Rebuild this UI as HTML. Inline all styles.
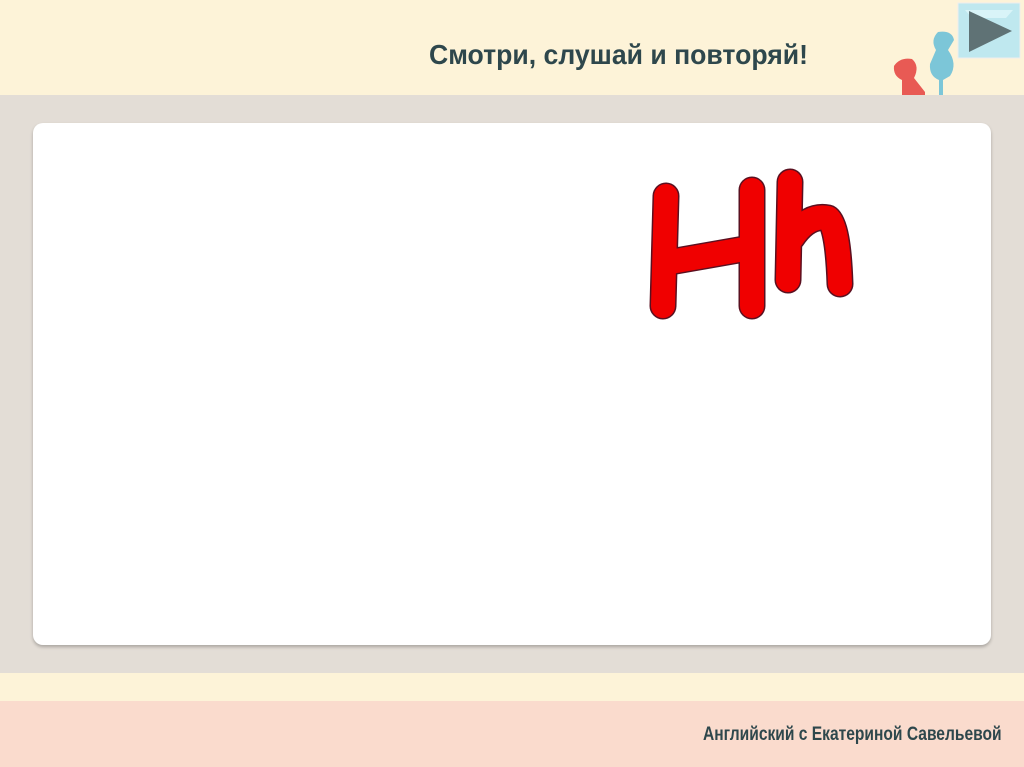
<!DOCTYPE html>
<html><head><meta charset="utf-8"><style>
body{margin:0;width:1024px;height:767px;overflow:hidden;position:relative;background:#e3ddd6;font-family:"Liberation Sans","DejaVu Sans",sans-serif}
.top{position:absolute;left:0;top:0;width:1024px;height:95px;background:#fdf3d8}
.card{position:absolute;left:33px;top:123px;width:958px;height:522px;background:#fff;border-radius:10px;box-shadow:0 2px 3px rgba(0,0,0,.25)}
.b1{position:absolute;left:0;top:673px;width:1024px;height:28px;background:#fdf3d8}
.b2{position:absolute;left:0;top:701px;width:1024px;height:66px;background:#fadbcd}
.t{position:absolute;white-space:nowrap;font-weight:bold;color:#2e474c;transform-origin:left top}
</style></head><body>
<div class="top"></div>
<div class="card"></div>
<div class="b1"></div><div class="b2"></div>
<div class="t" style="left:429px;top:39px;font-size:28px;transform:scaleX(0.95)">Смотри, слушай и повторяй!</div>
<div class="t" style="left:703px;top:724px;font-size:19px;transform:scaleX(0.82)">Английский с Екатериной Савельевой</div>
<svg style="position:absolute;left:0;top:0" width="1024" height="767">
<rect x="958" y="3" width="62" height="55" fill="#bfe8ef" stroke="#eee"/>
<polygon points="965,10 1013,10 1006,18 972,18" fill="#d9f4f8"/>
<polygon points="969,11 969,52 1012,31" fill="#5f7275"/>
<path d="M902 95 L902 80 Q893 76 894 66 Q900 57 912 59 Q920 66 914 78 L925 92 L925 95 Z" fill="#e85a54"/>
<path d="M939 95 L939 80 Q929 76 930 64 L936 50 Q930 40 938 32 Q952 30 954 40 L948 50 Q958 64 950 76 L943 80 L943 95 Z" fill="#7cc6d8"/>
<g fill="none" stroke-linecap="round" stroke-linejoin="round">
<g stroke="#5a1020" stroke-width="27">
<path d="M666 196 L663 306 M752 190 L752 306 M670 262 L750 248 M790 182 L788 280 M792 238 Q808 214 828 218 Q838 226 840 284"/>
</g>
<g stroke="#f00000" stroke-width="24">
<path d="M666 196 L663 306 M752 190 L752 306 M670 262 L750 248 M790 182 L788 280 M792 238 Q808 214 828 218 Q838 226 840 284"/>
</g>
</g>
</svg>
</body></html>
